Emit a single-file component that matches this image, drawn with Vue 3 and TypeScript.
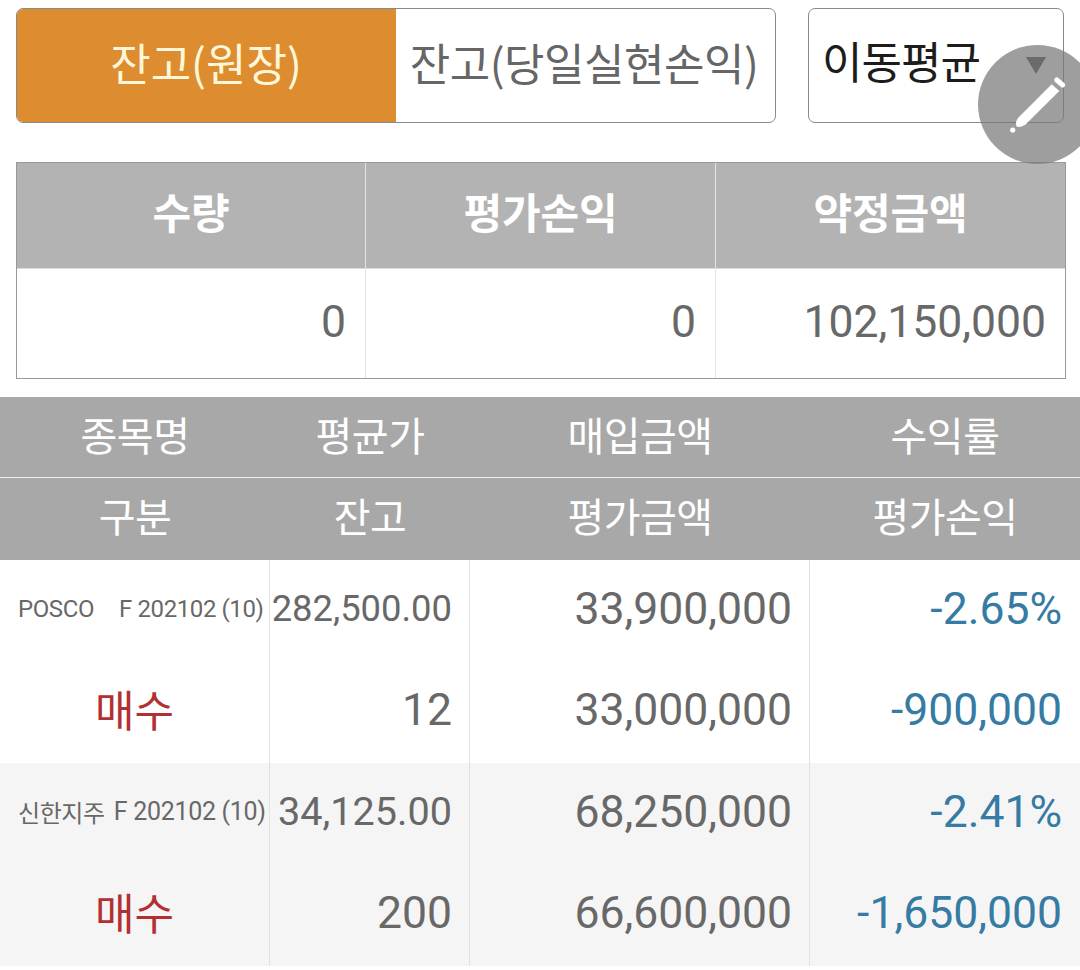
<script setup lang="ts">
type Position = {
  name: string;
  nameGap: boolean;
  avg: string;
  avgSize: number;
  qty: string;
  buy: string;
  value: string;
  rate: string;
  pnl: string;
};

const summary = [
  { label: "수량", value: "0" },
  { label: "평가손익", value: "0" },
  { label: "약정금액", value: "102,150,000" },
];

const headRows = [
  ["종목명", "평균가", "매입금액", "수익률"],
  ["구분", "잔고", "평가금액", "평가손익"],
];

// the app shrinks long prices to fit the column, hence avgSize
const positions: Position[] = [
  {
    name: "POSCO",
    nameGap: true,
    avg: "282,500.00",
    avgSize: 36.4,
    qty: "12",
    buy: "33,900,000",
    value: "33,000,000",
    rate: "-2.65%",
    pnl: "-900,000",
  },
  {
    name: "신한지주",
    nameGap: false,
    avg: "34,125.00",
    avgSize: 39.6,
    qty: "200",
    buy: "68,250,000",
    value: "66,600,000",
    rate: "-2.41%",
    pnl: "-1,650,000",
  },
];
</script>

<template>
  <div class="page">
    <div class="top">
      <div class="tabs">
        <div class="tab active">잔고(원장)</div>
        <div class="tab">잔고(당일실현손익)</div>
      </div>
      <div class="select">
        <span>이동평균</span>
        <i class="caret"></i>
      </div>
    </div>

    <div class="summary">
      <div v-for="s in summary" :key="s.label" class="sum-col">
        <div class="sum-head">{{ s.label }}</div>
        <div class="sum-val">{{ s.value }}</div>
      </div>
    </div>

    <div class="list-head">
      <div v-for="(row, i) in headRows" :key="i" class="head-row">
        <div v-for="h in row" :key="h" class="head-cell">{{ h }}</div>
      </div>
    </div>

    <div
      v-for="(p, i) in positions"
      :key="p.name"
      class="pos"
      :class="{ alt: i % 2 === 1 }"
    >
      <div class="cell first">
        <div class="line name">
          <span>{{ p.name }}</span>
          <span class="contract" :class="{ wide: p.nameGap }">F 202102 (10)</span>
        </div>
        <div class="line side">매수</div>
      </div>
      <div class="cell">
        <div class="line" :style="{ fontSize: p.avgSize + 'px' }">{{ p.avg }}</div>
        <div class="line">{{ p.qty }}</div>
      </div>
      <div class="cell">
        <div class="line">{{ p.buy }}</div>
        <div class="line">{{ p.value }}</div>
      </div>
      <div class="cell last">
        <div class="line blue">{{ p.rate }}</div>
        <div class="line blue">{{ p.pnl }}</div>
      </div>
    </div>

    <div class="fab">
      <svg width="119" height="119" viewBox="0 0 119 119">
        <path d="M78.7 35 L84.7 40" stroke="#fff" stroke-width="5" stroke-linecap="round" />
        <path d="M73.7 39.3 L81.3 46 L47.5 79.5 Q43 83 38.5 81.5 Q37 77 40 73 Z" fill="#fff" />
        <circle cx="34.7" cy="85" r="2.6" fill="#fff" />
      </svg>
    </div>
  </div>
</template>

<style>
html,
body {
  margin: 0;
  background: #fff;
}
</style>

<style scoped>
.page {
  position: relative;
  width: 1080px;
  height: 970px;
  overflow: hidden;
  background: #fff;
  font-family: Roboto, "Noto Sans CJK KR", sans-serif;
}

.top {
  display: flex;
  padding: 8px 16px 0;
  height: 115px;
}

.tabs {
  display: flex;
  width: 760px;
  box-sizing: border-box;
  border: 1px solid #8a8a8a;
  border-radius: 7px;
  overflow: hidden;
}

.tab {
  flex: 1;
  display: flex;
  align-items: center;
  justify-content: center;
  font-family: "Noto Sans CJK KR", sans-serif;
  font-size: 44px;
  letter-spacing: -0.5px;
  color: #666;
  white-space: nowrap;
  padding: 0 3px 8px 0;
  box-sizing: border-box;
}

.tab.active {
  flex: 0 0 380px;
  margin: -1px 0 -1px -1px;
  padding-right: 0;
  background: #dd8c2f;
  color: #fff7d8;
  letter-spacing: 0;
}

.select {
  margin-left: 32px;
  width: 256px;
  box-sizing: border-box;
  border: 1px solid #8a8a8a;
  border-radius: 7px;
  display: flex;
  align-items: flex-start;
  padding: 25px 0 0 13px;
  font-family: "Noto Sans CJK KR", sans-serif;
  font-size: 44px;
  line-height: 52px;
  letter-spacing: -1px;
  color: #1c1c1c;
}

.caret {
  margin: 23px 17px 0 auto;
  border-left: 10px solid transparent;
  border-right: 10px solid transparent;
  border-top: 17px solid #4a4a4a;
}

.summary {
  display: grid;
  grid-template-columns: 348px 350px 350px;
  margin: 39px 14px 0 16px;
  height: 217px;
  box-sizing: border-box;
  border: 1px solid #999;
}

.sum-col + .sum-col {
  border-left: 1px solid #e4e4e4;
}

.sum-head {
  height: 106px;
  background: #b3b3b3;
  border-bottom: 1px solid #dcdcdc;
  display: flex;
  align-items: center;
  justify-content: center;
  font-family: "Noto Sans CJK KR", sans-serif;
  font-size: 42px;
  font-weight: 700;
  letter-spacing: -0.2px;
  color: #fff;
  padding-bottom: 11px;
  box-sizing: border-box;
}

.sum-val {
  height: 109px;
  display: flex;
  align-items: center;
  justify-content: flex-end;
  padding: 0 19px 4px 0;
  box-sizing: border-box;
  font-size: 44.5px;
  color: #686868;
}

.list-head {
  margin-top: 18px;
  background: #a8a8a8;
}

.head-row,
.pos {
  display: grid;
  grid-template-columns: 270px 200px 340px 270px;
}

.head-row {
  height: 80px;
}

.head-row + .head-row {
  height: 83px;
  border-top: 1px solid #eee;
  box-sizing: border-box;
  padding-bottom: 3px;
}

.head-cell {
  display: flex;
  align-items: center;
  justify-content: center;
  font-family: "Noto Sans CJK KR", sans-serif;
  font-size: 40px;
  letter-spacing: -0.5px;
  color: #fff;
  padding-bottom: 6px;
}

.pos {
  height: 203px;
}

.pos.alt {
  background: #f5f5f5;
}

.cell {
  display: flex;
  flex-direction: column;
  min-width: 0;
  border-right: 1px solid #e2e2e2;
  padding-right: 17px;
}

.cell.first {
  padding-right: 0;
}

.cell.last {
  border-right: 0;
  padding-right: 18px;
}

.line {
  height: 101px;
  display: flex;
  align-items: center;
  justify-content: flex-end;
  padding-bottom: 4px;
  box-sizing: border-box;
  font-size: 44.5px;
  color: #686868;
  white-space: nowrap;
}

.line.name {
  justify-content: flex-start;
  padding-left: 18px;
  font-size: 24px;
  letter-spacing: -0.4px;
}

.contract {
  margin-left: 9px;
  font-size: 25px;
  letter-spacing: -0.3px;
}

.contract.wide {
  margin-left: 25px;
  font-size: 24px;
  letter-spacing: -0.4px;
}

.line.side {
  justify-content: center;
  padding-bottom: 7px;
  font-family: "Noto Sans CJK KR", sans-serif;
  font-size: 43px;
  color: #b23032;
}

.blue {
  color: #357ba3;
}

.fab {
  position: absolute;
  left: 978px;
  top: 45px;
  width: 119px;
  height: 119px;
  border-radius: 50%;
  background: rgba(120, 120, 120, 0.72);
}

.fab svg {
  display: block;
}
</style>
